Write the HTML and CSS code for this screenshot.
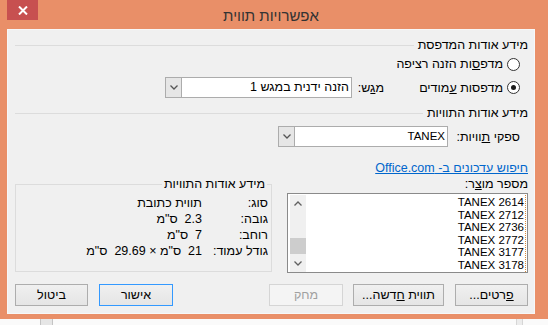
FILE: index.html
```html
<!DOCTYPE html>
<html lang="he">
<head>
<meta charset="utf-8">
<title>אפשרויות תווית</title>
<link rel="stylesheet" href="styles.css">
</head>
<body>
<div class="window">
  <div class="titlebar">
    <div class="close" aria-label="סגור">
      <svg width="10" height="9" viewBox="0 0 10 9"><path d="M1 0.5 L9 8.5 M9 0.5 L1 8.5" stroke="#fff" stroke-width="2" fill="none"/></svg>
    </div>
    <div class="title">אפשרויות תווית</div>
  </div>
  <div class="client" dir="rtl">
    <div class="section-head"><span>מידע אודות המדפסת</span><i class="rule"></i></div>
    <div class="radio-row first">
      <span class="radio"></span><span>מדפ<u>ס</u>ות הזנה רציפה</span>
    </div>
    <div class="tray-row">
      <div class="radio-row tray-radio"><span class="radio on"></span><span>מדפסות <u>ע</u>מודים</span></div>
      <span class="tray-label">מ<u>ג</u>ש:</span>
      <div class="combo tray-combo">
        <span class="combo-text">הזנה ידנית במגש 1</span>
        <span class="combo-btn"><svg width="8" height="5" viewBox="0 0 8 5"><path d="M0.5 0.5 L4 4 L7.5 0.5" fill="none" stroke="#555" stroke-width="1.3"/></svg></span>
      </div>
    </div>
    <div class="section-head second"><span>מידע אודות התוויות</span><i class="rule"></i></div>
    <div class="supplier-row">
      <span class="supplier-label">ספקי <u>ת</u>וויות:</span>
      <div class="combo supplier-combo">
        <span class="combo-text latin">TANEX</span>
        <span class="combo-btn"><svg width="8" height="5" viewBox="0 0 8 5"><path d="M0.5 0.5 L4 4 L7.5 0.5" fill="none" stroke="#555" stroke-width="1.3"/></svg></span>
      </div>
    </div>
    <div class="link-row"><a href="#" class="link">חיפוש עדכונים ב- Office.com</a></div>
    <div class="columns">
      <div class="product-col">
        <div class="product-label">מספר מו<u>צ</u>ר:</div>
        <div class="listbox">
          <div class="items latin">
            <div class="item">TANEX 2614</div>
            <div class="item">TANEX 2712</div>
            <div class="item">TANEX 2736</div>
            <div class="item">TANEX 2772</div>
            <div class="item">TANEX 3177</div>
            <div class="item">TANEX 3178</div>
          </div>
          <div class="scrollbar">
            <span class="sb-arrow"><svg width="8" height="5" viewBox="0 0 8 5"><path d="M0.5 4.5 L4 1 L7.5 4.5" fill="none" stroke="#606060" stroke-width="1.3"/></svg></span>
            <span class="sb-track"></span>
            <span class="sb-thumb"></span>
            <span class="sb-arrow"><svg width="8" height="5" viewBox="0 0 8 5"><path d="M0.5 0.5 L4 4 L7.5 0.5" fill="none" stroke="#606060" stroke-width="1.3"/></svg></span>
          </div>
        </div>
      </div>
      <div class="groupbox">
        <div class="gb-title">מידע אודות התוויות</div>
        <div class="gb-rows">
          <div class="gb-row"><span class="gb-label">סוג:</span><span class="gb-value">תווית כתובת</span></div>
          <div class="gb-row"><span class="gb-label">גובה:</span><span class="gb-value">2.3&nbsp; ס"מ</span></div>
          <div class="gb-row"><span class="gb-label">רוחב:</span><span class="gb-value">7&nbsp; ס"מ</span></div>
          <div class="gb-row"><span class="gb-label">גודל עמוד:</span><span class="gb-value">21&nbsp; ס"מ × 29.69&nbsp; ס"מ</span></div>
        </div>
      </div>
    </div>
    <div class="buttons">
      <div class="btn-group">
        <span class="btn w73"><u>פ</u>רטים...</span>
        <span class="btn w91">תווית <u>ח</u>דשה...</span>
        <span class="btn w74 disabled">מחק</span>
      </div>
      <div class="btn-group">
        <span class="btn w74 default">אישור</span>
        <span class="btn w73">ביטול</span>
      </div>
    </div>
  </div>
</div>
<div class="below">
  <span class="below-box one"></span>
  <span class="below-box two"></span>
</div>
</body>
</html>
```

FILE: styles.css
```css
* { box-sizing: border-box; }
html, body { margin: 0; padding: 0; }
body {
  width: 548px;
  height: 325px;
  overflow: hidden;
  background: #fafafa;
  font-family: "Liberation Sans", "DejaVu Sans", sans-serif;
  font-size: 12.5px;
  color: #000;
}
.latin {
  font-family: "Liberation Sans", "DejaVu Sans", sans-serif;
  font-size: 11.5px;
}
.window {
  height: 319px;
  background: #e98f68;
  padding-left: 7px;
}
.titlebar {
  height: 29px;
  margin-left: -7px;
  display: grid;
  grid-template-columns: 38px 1fr 44px;
  align-items: start;
}
.close {
  grid-column: 1;
  justify-self: end;
  width: 31px;
  height: 20px;
  background: #c75050;
  display: flex;
  align-items: center;
  justify-content: center;
}
.title {
  grid-column: 2;
  text-align: center;
  font-size: 15px;
  line-height: 20px;
  padding-top: 6px;
  color: #333;
}
.client {
  width: 528px;
  height: 285px;
  border: 1px solid #f7f7f7;
  background: #f0f0f0;
  padding: 0 6px 0 7px;
  overflow: hidden;
}
.section-head {
  display: flex;
  align-items: center;
  gap: 4px;
  height: 16px;
  margin-top: 7px;
  white-space: nowrap;
}
.section-head .rule {
  flex: 1;
  height: 1px;
  background: #dcdcdc;
}
.radio-row {
  display: flex;
  align-items: center;
  gap: 4px;
  height: 16px;
  padding-right: 8px;
  white-space: nowrap;
}
.radio-row.first { margin-top: 3px; }
.radio {
  width: 13px;
  height: 13px;
  border: 1px solid #333;
  border-radius: 50%;
  background: #fff;
  display: flex;
  align-items: center;
  justify-content: center;
}
.radio.on::after {
  content: "";
  width: 5px;
  height: 5px;
  border-radius: 50%;
  background: #1a1a1a;
}
.tray-row {
  display: flex;
  align-items: center;
  height: 21px;
  margin-top: 5px;
}
.tray-radio { width: 144px; }
.tray-label { width: 32px; white-space: nowrap; }
.combo {
  display: flex;
  align-items: stretch;
  height: 21px;
  border: 1px solid #acacac;
  background: #fff;
}
.tray-combo { width: 187px; }
.supplier-combo { width: 170px; }
.combo-text {
  flex: 1;
  line-height: 19px;
  padding-right: 2px;
  white-space: nowrap;
}
.combo-btn {
  width: 16px;
  background: #e6e6e6;
  border-right: 1px solid #acacac;
  display: flex;
  align-items: center;
  justify-content: center;
}
.section-head.second { margin-top: 7px; }
.supplier-row {
  display: flex;
  align-items: center;
  height: 21px;
  margin-top: 5px;
}
.supplier-label {
  width: 80px;
  padding-right: 8px;
  white-space: nowrap;
}
.link-row {
  height: 16px;
  line-height: 16px;
  margin-top: 13px;
}
.link {
  color: #0066cc;
  text-decoration: underline;
}
.columns {
  display: flex;
  justify-content: space-between;
  align-items: flex-start;
}
.product-col { width: 241px; }
.product-label {
  height: 16px;
  line-height: 16px;
}
.listbox {
  margin-top: 1px;
  height: 80px;
  border: 1px solid #8a8a8a;
  background: #fff;
  display: flex;
  padding: 1px 1px 0 2px;
}
.items {
  flex: 1;
  padding-top: 1px;
  padding-right: 1px;
  border-right: 1px dotted #d88a3a;
  overflow: hidden;
}
.item {
  height: 12.6px;
  line-height: 12.6px;
  white-space: nowrap;
}
.scrollbar {
  width: 16px;
  height: 77px;
  background: #f0f0f0;
  display: flex;
  flex-direction: column;
}
.sb-arrow {
  height: 17px;
  display: flex;
  align-items: center;
  justify-content: center;
}
.sb-track { flex: 1; }
.sb-thumb {
  height: 16px;
  margin-bottom: 1px;
  background: #cdcdcd;
}
.groupbox {
  width: 257px;
  height: 88px;
  margin-top: 8px;
  border: 1px solid #dcdcdc;
  padding-right: 3px;
}
.gb-title {
  width: fit-content;
  margin-top: -9px;
  margin-right: 1px;
  padding: 0 2px;
  line-height: 16px;
  background: #f0f0f0;
  white-space: nowrap;
}
.gb-rows { margin-top: 3px; }
.gb-row {
  display: flex;
  height: 16px;
  line-height: 16px;
  white-space: nowrap;
}
.gb-label { width: 66px; }
.buttons {
  display: flex;
  justify-content: space-between;
  margin-top: 11px;
}
.btn-group {
  display: flex;
  gap: 11px;
}
.btn-group:first-child { gap: 10px; }
.btn-group:first-child .btn:first-child { margin-left: 1px; }
.btn {
  height: 22px;
  line-height: 20px;
  text-align: center;
  border: 1px solid #adadad;
  background: linear-gradient(#f0f0f0, #e5e5e5);
  white-space: nowrap;
}
.btn.default { border-color: #3399ff; }
.btn.disabled {
  border-color: #d5d5d5;
  background: #f4f4f4;
  color: #a0a0a0;
}
.w73 { width: 73px; }
.w74 { width: 74px; }
.w91 { width: 91px; }
.below {
  height: 6px;
  display: flex;
  background: #fafafa;
}
.below-box {
  height: 6px;
  background: #e6e6e6;
  border-left: 1px solid #c4c4c4;
  border-right: 1px solid #c4c4c4;
}
.below-box.one { width: 13px; margin-left: 40px; }
.below-box.two { width: 7px; margin-left: 463px; background: #ececec; border-color: #d6d6d6; }
```
